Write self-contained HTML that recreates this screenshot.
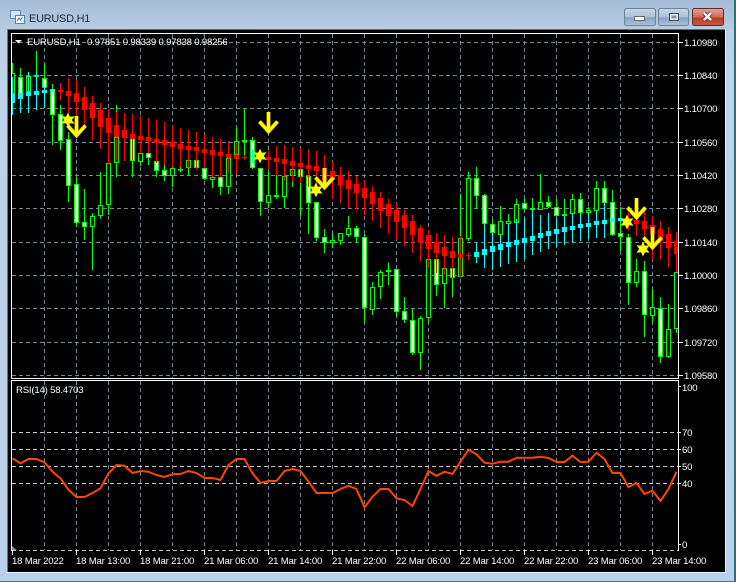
<!DOCTYPE html>
<html><head><meta charset="utf-8"><title>EURUSD,H1</title>
<style>
html,body{margin:0;padding:0;width:736px;height:582px;overflow:hidden;background:#b8d0e8}
svg{display:block}
text{font-family:"Liberation Sans",sans-serif;font-size:9.6px;letter-spacing:-.2px;fill:#fff}
</style></head><body>
<svg width="736" height="582" viewBox="0 0 736 582" xmlns="http://www.w3.org/2000/svg">
<defs>
<linearGradient id="tb" x1="0" y1="0" x2="0" y2="1"><stop offset="0" stop-color="#a4bdd6"/><stop offset="1" stop-color="#b6cde3"/></linearGradient>
<linearGradient id="sd" x1="0" y1="0" x2="0" y2="1"><stop offset="0" stop-color="#b6cde3"/><stop offset=".12" stop-color="#bcd3ea"/><stop offset="1" stop-color="#b9d1ea"/></linearGradient>
<linearGradient id="bt" x1="0" y1="0" x2="0" y2="1"><stop offset="0" stop-color="#c6d8ea"/><stop offset=".5" stop-color="#a9c1d9"/><stop offset=".55" stop-color="#86a3c0"/><stop offset="1" stop-color="#a9c4de"/></linearGradient>
<linearGradient id="cl" x1="0" y1="0" x2="0" y2="1"><stop offset="0" stop-color="#e0a595"/><stop offset=".5" stop-color="#cf6a55"/><stop offset=".55" stop-color="#bb3a28"/><stop offset="1" stop-color="#c8594a"/></linearGradient>
<clipPath id="mp"><rect x="12" y="34" width="666" height="344"/></clipPath>
<clipPath id="rp"><rect x="12" y="381" width="666" height="169"/></clipPath>
</defs>

<!-- window frame -->
<rect width="736" height="582" fill="url(#sd)"/>
<rect width="736" height="30" fill="url(#tb)"/>
<rect x="734" y="0" width="2" height="582" fill="#2d6f78"/>
<rect x="0" y="581" width="736" height="1" fill="#1f8a92"/>
<rect x="7" y="29" width="719" height="544" fill="#e8eef4"/>
<rect x="7" y="29" width="718" height="1" fill="#5e6c7a"/>
<rect x="7" y="29" width="1" height="543" fill="#6a7682"/>
<rect x="8" y="30" width="717" height="542" fill="#000"/>

<!-- title icon -->
<rect x="10.5" y="10.5" width="10" height="8" fill="#d8e6f4" stroke="#5c8ac0"/>
<rect x="15.5" y="15.5" width="9" height="8" fill="#fff" stroke="#4f7db8"/>
<path d="M17 21l2-3 1.5 2 2-3" fill="none" stroke="#3a6aa8"/>
<text x="29" y="22" style="font-size:10.9px;letter-spacing:-.2px;fill:#1b2733">EURUSD,H1</text>

<!-- buttons -->
<rect x="624.5" y="8.5" width="31" height="17" rx="2" fill="url(#bt)" stroke="#6b8299"/>
<rect x="634.5" y="16.5" width="10" height="4" fill="#f4f6f8" stroke="#5d6b78"/>
<rect x="658.5" y="8.5" width="30" height="17" rx="2" fill="url(#bt)" stroke="#6b8299"/>
<rect x="669.5" y="13.5" width="9" height="7" fill="#e8eef4" stroke="#3f4b57"/>
<rect x="671.5" y="15.5" width="5" height="3" fill="#7e93a8"/>
<rect x="692.5" y="8.5" width="31" height="17" rx="2" fill="url(#cl)" stroke="#5e2b26"/>
<path d="M704 13l7 7M711 13l-7 7" stroke="#4a2320" stroke-width="4"/>
<path d="M704 13l7 7M711 13l-7 7" stroke="#fff" stroke-width="2.6"/>

<!-- grid main -->
<g fill="none" stroke="#778899" stroke-width="1" stroke-dasharray="4 3">
<path d="M12 42.5H678M12 75.5H678M12 108.5H678M12 142.5H678M12 175.5H678M12 208.5H678M12 242.5H678M12 275.5H678M12 308.5H678M12 342.5H678M12 375.5H678"/>
<path d="M44.5 34V378M76.5 34V378M108.5 34V378M140.5 34V378M172.5 34V378M204.5 34V378M236.5 34V378M268.5 34V378M300.5 34V378M332.5 34V378M364.5 34V378M396.5 34V378M428.5 34V378M460.5 34V378M492.5 34V378M524.5 34V378M556.5 34V378M588.5 34V378M620.5 34V378M652.5 34V378"/>
<path d="M44.5 381V550M76.5 381V550M108.5 381V550M140.5 381V550M172.5 381V550M204.5 381V550M236.5 381V550M268.5 381V550M300.5 381V550M332.5 381V550M364.5 381V550M396.5 381V550M428.5 381V550M460.5 381V550M492.5 381V550M524.5 381V550M556.5 381V550M588.5 381V550M620.5 381V550M652.5 381V550"/>
</g>
<path d="M12 432.5H678M12 449.5H678M12 466.5H678M12 483.5H678M12 550.5H678" fill="none" stroke="#c4c8cc" stroke-dasharray="4 3"/>

<!-- candles -->
<g clip-path="url(#mp)" fill="none" stroke-width="1">
<path stroke="#00ff00" d="M12.5 63V80M20.5 68V94M28.5 72V92M36.5 51V91M44.5 63V90M52.5 84V145M60.5 105V150M68.5 132V202M76.5 177V227M84.5 189V240M92.5 213V270M100.5 172V219M108.5 155V215M116.5 105V177M132.5 138V177M140.5 153V166M148.5 153V165M156.5 161V177M164.5 165V181M172.5 166V187M180.5 167V172M188.5 160V176M196.5 160V170M204.5 168V180M212.5 172V188M220.5 171V195M228.5 158V194M236.5 127V158M244.5 109V155M252.5 137V169M260.5 168V216M268.5 171V208M276.5 175V199M284.5 175V208M292.5 169V187M300.5 169V216M308.5 176V234M316.5 202V241M324.5 229V253M332.5 233V248M340.5 233V245M348.5 216V237M356.5 226V243M364.5 234V323M372.5 282V315M380.5 270V299M388.5 263V285M396.5 269V317M404.5 297V323M412.5 309V355M420.5 316V370M428.5 259V323M436.5 259V296M444.5 268V308M452.5 268V297M460.5 194V278M468.5 172V241M476.5 167V209M484.5 194V226M492.5 219V234M500.5 206V236M508.5 214V224M516.5 199V224M524.5 198V210M532.5 198V210M540.5 174V210M548.5 196V208M556.5 199V216M564.5 199V216M572.5 194V214M580.5 193V213M588.5 207V213M596.5 181V212M604.5 181V204M612.5 190V236M620.5 207V251M628.5 234V305M636.5 259V287M644.5 261V337M652.5 289V323M660.5 297V363M668.5 304V358M676.5 272V333"/>
<path stroke="#00ff00" fill="#fff" d="M18.5 77.5h4v16h-4zM42.5 78.5h4v9h-4zM50.5 90.5h4v24h-4zM58.5 114.5h4v26h-4zM66.5 139.5h4v46h-4zM74.5 184.5h4v38h-4zM82.5 222.5h4v4h-4zM130.5 138.5h4v22h-4zM146.5 153.5h4v4h-4zM154.5 161.5h4v9h-4zM162.5 170.5h4v5h-4zM194.5 160.5h4v7h-4zM202.5 168.5h4v10h-4zM218.5 177.5h4v9h-4zM250.5 140.5h4v27h-4zM258.5 168.5h4v33h-4zM298.5 169.5h4v7h-4zM306.5 176.5h4v26h-4zM314.5 202.5h4v35h-4zM322.5 237.5h4v5h-4zM354.5 228.5h4v8h-4zM362.5 237.5h4v70h-4zM394.5 269.5h4v42h-4zM402.5 311.5h4v8h-4zM410.5 320.5h4v32h-4zM434.5 259.5h4v25h-4zM450.5 268.5h4v9h-4zM474.5 178.5h4v17h-4zM482.5 195.5h4v28h-4zM490.5 224.5h4v8h-4zM522.5 203.5h4v5h-4zM546.5 202.5h4v4h-4zM554.5 207.5h4v8h-4zM578.5 199.5h4v13h-4zM602.5 188.5h4v14h-4zM610.5 202.5h4v32h-4zM618.5 233.5h4v3h-4zM626.5 237.5h4v45h-4zM642.5 271.5h4v43h-4zM658.5 308.5h4v48h-4z"/>
<path stroke="#00ff00" fill="#000" d="M10.5 73.5h4v20h-4zM26.5 76.5h4v15h-4zM34.5 75.5h4v1h-4zM90.5 216.5h4v10h-4zM98.5 205.5h4v10h-4zM106.5 163.5h4v41h-4zM114.5 137.5h4v25h-4zM138.5 153.5h4v8h-4zM170.5 168.5h4v7h-4zM186.5 160.5h4v7h-4zM210.5 177.5h4v2h-4zM226.5 158.5h4v28h-4zM234.5 141.5h4v13h-4zM242.5 140.5h4v1h-4zM266.5 195.5h4v7h-4zM274.5 195.5h4v1h-4zM282.5 176.5h4v20h-4zM290.5 169.5h4v6h-4zM330.5 240.5h4v2h-4zM338.5 233.5h4v7h-4zM346.5 228.5h4v6h-4zM370.5 287.5h4v22h-4zM378.5 272.5h4v14h-4zM386.5 270.5h4v1h-4zM418.5 318.5h4v34h-4zM426.5 259.5h4v58h-4zM442.5 268.5h4v15h-4zM458.5 238.5h4v38h-4zM466.5 178.5h4v60h-4zM498.5 221.5h4v13h-4zM506.5 221.5h4v2h-4zM514.5 204.5h4v18h-4zM530.5 208.5h4v1h-4zM538.5 202.5h4v7h-4zM562.5 214.5h4v1h-4zM570.5 199.5h4v14h-4zM586.5 210.5h4v2h-4zM594.5 188.5h4v22h-4zM634.5 271.5h4v11h-4zM650.5 307.5h4v8h-4zM666.5 329.5h4v27h-4zM674.5 272.5h4v56h-4zM178.5 169.5h4v.5h-4z"/>
<path stroke="#ff0000" d="M60.5 83V100M68.5 78V113M76.5 80V120M84.5 87V126M92.5 96V140M100.5 103V149M108.5 109V165M116.5 112V160M124.5 113V161M132.5 114V160M140.5 116V153M148.5 118V153M156.5 120V163M164.5 122V165M172.5 125V167M180.5 128V167M188.5 130V168M196.5 132V170M204.5 134V168M212.5 137V177M220.5 139V177M228.5 141V173M236.5 143V174M244.5 155V160M268.5 151V169M276.5 146V175M284.5 145V181M292.5 147V182M300.5 148V183M308.5 149V187M316.5 151V187M324.5 155V190M332.5 161V199M340.5 167V203M348.5 171V208M356.5 176V209M364.5 180V215M372.5 186V221M380.5 192V228M388.5 199V234M396.5 203V240M404.5 210V246M412.5 215V253M420.5 225V261M428.5 230V268M436.5 233V273M444.5 235V275M452.5 237V278M460.5 236V278M468.5 252V260M628.5 213V230M636.5 198V236M644.5 211V240M652.5 216V260M660.5 221V259M668.5 227V267M676.5 232V272"/>
<path stroke="#ff0000" stroke-width="5" d="M60.5 90V92M68.5 91V96M76.5 93V102M84.5 97V110M92.5 103V118M100.5 110V127M108.5 118V133M116.5 125V137M124.5 130V138M132.5 134V139M140.5 136V140M148.5 137V141M156.5 139V143M164.5 140V145M172.5 142V147M180.5 144V149M188.5 146V150M196.5 147V151M204.5 149V153M212.5 150V155M220.5 152V156M228.5 154V158M236.5 155V159M268.5 157V160M276.5 158V162M284.5 159V164M292.5 161V166M300.5 163V167M308.5 165V169M316.5 166V171M324.5 168V180M332.5 171V180M340.5 175V185M348.5 180V189M356.5 184V193M364.5 188V198M372.5 192V204M380.5 198V211M388.5 204V216M396.5 210V222M404.5 215V228M412.5 221V235M420.5 228V243M428.5 235V249M436.5 242V253M444.5 247V256M452.5 251V258M460.5 254V258M628.5 220V222M636.5 220V224M644.5 221V229M652.5 225V234M660.5 229V241M668.5 234V248M676.5 241V254"/>
<path stroke="#ff0000" stroke-width="1" d="M242 157.5h5M466 255.5h5"/>
<path stroke="#00ffff" d="M12.5 77V115M20.5 93V113M28.5 72V113M36.5 72V110M44.5 87V108M52.5 89V92M252.5 149V163M476.5 243V263M484.5 225V268M492.5 233V270M500.5 235V267M508.5 224V264M516.5 219V262M524.5 218V259M532.5 209V255M540.5 215V252M548.5 213V249M556.5 218V247M564.5 216V245M572.5 214V243M580.5 213V241M588.5 213V239M596.5 211V238M604.5 203V238"/>
<path stroke="#00ffff" stroke-width="5" d="M12.5 94V103M20.5 93V99M28.5 92V96M36.5 91V95M44.5 90V93M52.5 89V91M476.5 252V257M484.5 249V255M492.5 246V252M500.5 244V250M508.5 242V247M516.5 240V245M524.5 238V243M532.5 236V241M540.5 233V238M548.5 231V236M556.5 229V234M564.5 227V232M572.5 226V230M580.5 224V228M588.5 223V227M596.5 221V225M604.5 220V224M612.5 218V222M620.5 218V221"/>
<path stroke="#00ffff" d="M250 157.5h5"/>

<!-- arrows -->
<g stroke="#d8a000" stroke-width="4" fill="none" stroke-linejoin="miter">
<path d="M76.5 116V135M67.5 125.5L76.5 135.5L85.5 125.5"/>
<path d="M268.5 112V131M259.5 121.5L268.5 131.5L277.5 121.5"/>
<path d="M324.5 168V187M315.5 177.5L324.5 187.5L333.5 177.5"/>
<path d="M636.5 198V217M627.5 207.5L636.5 217.5L645.5 207.5"/>
<path d="M652.5 227V247M643.5 237.5L652.5 247.5L661.5 237.5"/>
</g>
<g stroke="#ffff00" stroke-width="3" fill="none" stroke-linejoin="miter">
<path d="M76.5 116V135M67.5 125.5L76.5 135.5L85.5 125.5"/>
<path d="M268.5 112V131M259.5 121.5L268.5 131.5L277.5 121.5"/>
<path d="M324.5 168V187M315.5 177.5L324.5 187.5L333.5 177.5"/>
<path d="M636.5 198V217M627.5 207.5L636.5 217.5L645.5 207.5"/>
<path d="M652.5 227V247M643.5 237.5L652.5 247.5L661.5 237.5"/>
</g>
<!-- stars -->
<g fill="#ffff00" stroke="none">
<polygon transform="translate(68 120)" points="0,-7.5 1.9,-3.3 6.5,-3.75 3.8,0 6.5,3.75 1.9,3.3 0,7.5 -1.9,3.3 -6.5,3.75 -3.8,0 -6.5,-3.75 -1.9,-3.3"/>
<polygon transform="translate(260 156)" points="0,-7.5 1.9,-3.3 6.5,-3.75 3.8,0 6.5,3.75 1.9,3.3 0,7.5 -1.9,3.3 -6.5,3.75 -3.8,0 -6.5,-3.75 -1.9,-3.3"/>
<polygon transform="translate(316 190)" points="0,-7.5 1.9,-3.3 6.5,-3.75 3.8,0 6.5,3.75 1.9,3.3 0,7.5 -1.9,3.3 -6.5,3.75 -3.8,0 -6.5,-3.75 -1.9,-3.3"/>
<polygon transform="translate(627 222)" points="0,-7.5 1.9,-3.3 6.5,-3.75 3.8,0 6.5,3.75 1.9,3.3 0,7.5 -1.9,3.3 -6.5,3.75 -3.8,0 -6.5,-3.75 -1.9,-3.3"/>
<polygon transform="translate(643 249)" points="0,-7.5 1.9,-3.3 6.5,-3.75 3.8,0 6.5,3.75 1.9,3.3 0,7.5 -1.9,3.3 -6.5,3.75 -3.8,0 -6.5,-3.75 -1.9,-3.3"/>
</g>
</g>

<!-- RSI -->
<polygon points="12,546 17,550 12,550" fill="#778899"/>
<polyline clip-path="url(#rp)" fill="none" stroke="#ff4500" stroke-width="2" points="12.5,458.3 20.5,463.3 28.5,459 36.5,459 44.5,462.3 52.5,471.7 60.5,478.3 68.5,490 76.5,497 84.5,497 92.5,493 100.5,488.3 108.5,473.3 116.5,465 124.5,465.7 132.5,473 140.5,471 148.5,471.7 156.5,475 164.5,477 172.5,474.3 180.5,474 188.5,471 196.5,473 204.5,478 212.5,478 220.5,480 228.5,465 236.5,459 244.5,459 252.5,473.3 260.5,483 268.5,481 276.5,481 284.5,471 292.5,469 300.5,471 308.5,481.7 316.5,493 324.5,493 332.5,493 340.5,489 348.5,485.7 356.5,489 364.5,507.3 372.5,496.7 380.5,489 388.5,489 396.5,498.3 404.5,500 412.5,506 420.5,489 428.5,471 436.5,476 444.5,471.7 452.5,474 460.5,461.7 468.5,449.7 476.5,454.3 484.5,462.7 492.5,463.7 500.5,461.7 508.5,461.7 516.5,457.7 524.5,457.7 532.5,457.7 540.5,456.7 548.5,458 556.5,462 564.5,462 572.5,455.7 580.5,462 588.5,461.7 596.5,452.7 604.5,459 612.5,473 620.5,473 628.5,487 636.5,483 644.5,494 652.5,490.7 660.5,501 668.5,489 676.5,471.7"/>

<!-- frames -->
<g fill="#fff">
<rect x="11" y="33" width="668" height="1"/>
<rect x="11" y="33" width="1" height="345"/>
<rect x="678" y="33" width="1" height="346"/>
<rect x="11" y="378" width="668" height="1"/>
<rect x="11" y="380" width="668" height="1"/>
<rect x="11" y="380" width="1" height="171"/>
<rect x="678" y="380" width="1" height="171"/>
</g>
<path d="M678 42.5h5M678 75.5h5M678 108.5h5M678 142.5h5M678 175.5h5M678 208.5h5M678 242.5h5M678 275.5h5M678 308.5h5M678 342.5h5M678 375.5h5M678 432.5h3M678 449.5h3M678 466.5h3M678 483.5h3M678 386.5h3M678 544.5h3" stroke="#fff"/>
<path d="M12.5 550V555M76.5 550V555M140.5 550V555M204.5 550V555M268.5 550V555M332.5 550V555M396.5 550V555M460.5 550V555M524.5 550V555M588.5 550V555M652.5 550V555" stroke="#fff"/>

<!-- labels -->
<polygon points="15,40 22,40 18.5,43.5" fill="#fff"/>
<text x="27" y="45">EURUSD,H1</text>
<text x="87" y="45" xml:space="preserve">0.97851 0.98339 0.97838 0.98256</text>
<text x="16" y="393">RSI(14) 58.4703</text>
<g>
<text x="684" y="46">1.10980</text><text x="684" y="79">1.10840</text><text x="684" y="112">1.10700</text><text x="684" y="146">1.10560</text><text x="684" y="179">1.10420</text><text x="684" y="212">1.10280</text><text x="684" y="246">1.10140</text><text x="684" y="279">1.10000</text><text x="684" y="312">1.09860</text><text x="684" y="346">1.09720</text><text x="684" y="379">1.09580</text>
<text x="682" y="391">100</text><text x="682" y="436">70</text><text x="682" y="453">60</text><text x="682" y="470">50</text><text x="682" y="487">40</text><text x="682" y="548">0</text>
<text x="12" y="564">18 Mar 2022</text><text x="76" y="564">18 Mar 13:00</text><text x="140" y="564">18 Mar 21:00</text><text x="204" y="564">21 Mar 06:00</text><text x="268" y="564">21 Mar 14:00</text><text x="332" y="564">21 Mar 22:00</text><text x="396" y="564">22 Mar 06:00</text><text x="460" y="564">22 Mar 14:00</text><text x="524" y="564">22 Mar 22:00</text><text x="588" y="564">23 Mar 06:00</text><text x="652" y="564">23 Mar 14:00</text>
</g>
</svg>
</body></html>
